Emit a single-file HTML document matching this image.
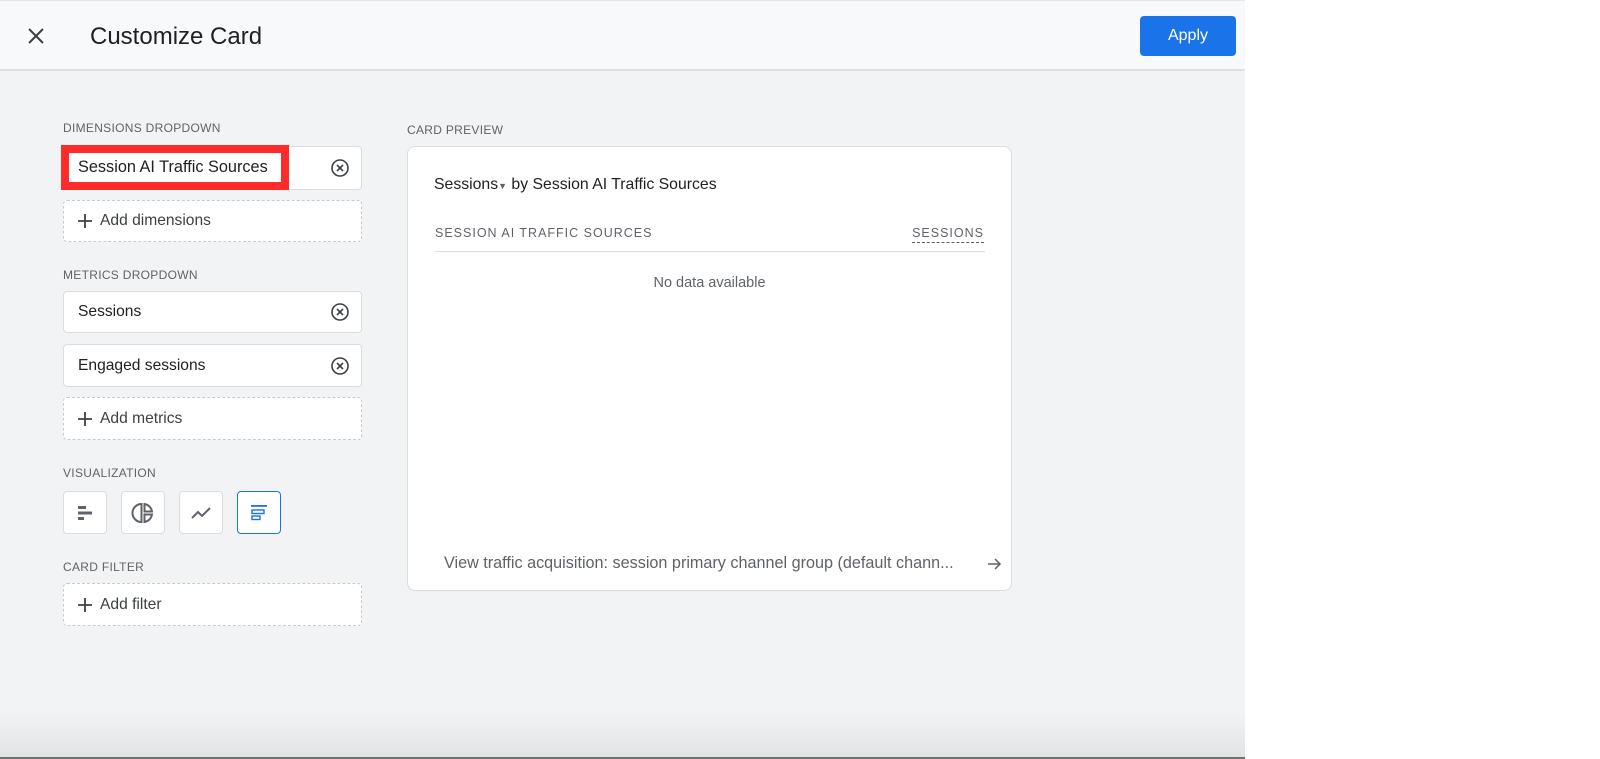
<!DOCTYPE html>
<html><head><style>
*{box-sizing:border-box;margin:0;padding:0}
body{width:1600px;height:759px;background:#fff;font-family:"Liberation Sans",sans-serif;position:relative;overflow:hidden}
#panel{position:absolute;left:0;top:0;width:1245px;height:759px;background:#f1f3f4}
#hdr{position:absolute;left:0;top:0;width:1245px;height:71px;background:#f8f9fa;border-top:1px solid #e3e4e6;border-bottom:2px solid #dfe0e2}
.lbl{position:absolute;font-size:12px;color:#5f6368;letter-spacing:.3px}
.box{position:absolute;left:63px;width:299px;background:#fff;border:1px solid #dadce0;border-radius:4px;font-size:15.6px;color:#202124}
.box span{position:absolute;left:14px;top:50%;transform:translateY(-50%)}
.dash{border:1px dashed #c8cacd}
.dash span{left:36px;color:#3c4043}
.plus{position:absolute;left:12px;top:50%;transform:translateY(-50%)}
.cx{position:absolute;right:11px;top:50%;transform:translateY(-50%)}
.vb{position:absolute;top:491px;width:44px;height:43px;background:#fff;border:1px solid #dadce0;border-radius:4px;display:flex;align-items:center;justify-content:center}
</style></head><body>
<div id="panel"></div>
<div id="hdr">
<svg style="position:absolute;left:28px;top:27px" width="16" height="16" viewBox="0 0 16 16"><path d="M1 1L15 15M15 1L1 15" stroke="#3c4043" stroke-width="2"/></svg>
<div style="position:absolute;left:90px;top:22px;font-size:24px;color:#202124">Customize Card</div>
<div style="position:absolute;left:1140px;top:15px;width:96px;height:40px;background:#1a73e8;border-radius:4px;color:#fff;font-size:16px;text-align:center;line-height:40px">Apply</div>
</div>
<div style="position:absolute;left:0;top:712px;width:1245px;height:46px;background:linear-gradient(#f1f3f4,#e2e3e5)"></div>
<div style="position:absolute;left:0;top:757px;width:1245px;height:2px;background:#6e7372"></div>

<div class="lbl" style="left:63px;top:121px">DIMENSIONS DROPDOWN</div>
<div class="box" style="top:146px;height:44px">
<svg class="cx" width="20" height="20" viewBox="0 0 20 20"><circle cx="10" cy="10" r="8" fill="none" stroke="#3c4043" stroke-width="1.6"/><path d="M7 7L13 13M13 7L7 13" stroke="#3c4043" stroke-width="1.6"/></svg>
</div>
<div style="position:absolute;left:61px;top:145px;width:228px;height:45px;border:8px solid #ff2a2a;background:#fff"></div>
<div style="position:absolute;left:78px;top:158px;font-size:16.3px;color:#202124">Session AI Traffic Sources</div>
<div class="box dash" style="top:200px;height:42px"><svg class="plus" width="18" height="18" viewBox="0 0 18 18"><path d="M9 2V16M2 9H16" stroke="#3c4043" stroke-width="1.8"/></svg><span>Add dimensions</span></div>

<div class="lbl" style="left:63px;top:268px">METRICS DROPDOWN</div>
<div class="box" style="top:291px;height:42px"><span>Sessions</span><svg class="cx" width="20" height="20" viewBox="0 0 20 20"><circle cx="10" cy="10" r="8" fill="none" stroke="#3c4043" stroke-width="1.6"/><path d="M7 7L13 13M13 7L7 13" stroke="#3c4043" stroke-width="1.6"/></svg></div>
<div class="box" style="top:344px;height:43px"><span>Engaged sessions</span><svg class="cx" width="20" height="20" viewBox="0 0 20 20"><circle cx="10" cy="10" r="8" fill="none" stroke="#3c4043" stroke-width="1.6"/><path d="M7 7L13 13M13 7L7 13" stroke="#3c4043" stroke-width="1.6"/></svg></div>
<div class="box dash" style="top:397px;height:43px"><svg class="plus" width="18" height="18" viewBox="0 0 18 18"><path d="M9 2V16M2 9H16" stroke="#3c4043" stroke-width="1.8"/></svg><span>Add metrics</span></div>

<div class="lbl" style="left:63px;top:466px">VISUALIZATION</div>
<div class="vb" style="left:63px"><svg width="18" height="18" viewBox="0 0 18 18"><rect x="2" y="2" width="8" height="3" fill="#5f6368"/><rect x="2" y="7.5" width="14" height="3" fill="#5f6368"/><rect x="2" y="13" width="6" height="3" fill="#5f6368"/></svg></div>
<div class="vb" style="left:121px"><svg width="24" height="24" viewBox="0 0 24 24"><path d="M10.5 3A9 9 0 0 0 10.5 21ZM13.5 3V10.5H21A9 9 0 0 0 13.5 3ZM13.5 13.5V21A9 9 0 0 0 21 13.5Z" fill="none" stroke="#5f6368" stroke-width="2"/></svg></div>
<div class="vb" style="left:179px"><svg width="24" height="24" viewBox="0 0 24 24"><path d="M3 17L9 11L13 15L21 7" fill="none" stroke="#5f6368" stroke-width="2"/></svg></div>
<div class="vb" style="left:237px;border-color:#1a73e8"><svg width="20" height="20" viewBox="0 0 20 20"><rect x="2" y="2" width="16" height="1.8" fill="#1a73e8"/><rect x="3" y="7" width="12" height="3.5" fill="none" stroke="#1a73e8" stroke-width="1.4"/><rect x="3" y="13" width="8" height="3.5" fill="none" stroke="#1a73e8" stroke-width="1.4"/></svg></div>

<div class="lbl" style="left:63px;top:560px">CARD FILTER</div>
<div class="box dash" style="top:583px;height:43px"><svg class="plus" width="18" height="18" viewBox="0 0 18 18"><path d="M9 2V16M2 9H16" stroke="#3c4043" stroke-width="1.8"/></svg><span>Add filter</span></div>

<div class="lbl" style="left:407px;top:123px">CARD PREVIEW</div>
<div style="position:absolute;left:407px;top:146px;width:605px;height:445px;background:#fff;border:1px solid #dadce0;border-radius:8px">
<div style="position:absolute;left:26px;top:29px;font-size:15.8px;color:#202124">Sessions<span style="font-size:9px;color:#5f6368">▼</span> by Session AI Traffic Sources</div>
<div style="position:absolute;left:27px;top:79px;font-size:12.5px;color:#5f6368;letter-spacing:1px">SESSION AI TRAFFIC SOURCES</div>
<div style="position:absolute;right:27px;top:79px;font-size:12.5px;color:#5f6368;letter-spacing:1px;border-bottom:1px dashed #5f6368;padding-bottom:2px">SESSIONS</div>
<div style="position:absolute;left:27px;top:104px;width:550px;height:1px;background:#dadce0"></div>
<div style="position:absolute;left:0;width:100%;top:128px;text-align:center;font-size:14.5px;color:#5f6368">No data available</div>
<div style="position:absolute;left:36px;top:407px;font-size:16.2px;color:#5f6368">View traffic acquisition: session primary channel group (default chann...</div>
<svg style="position:absolute;left:578px;top:409px" width="16" height="16" viewBox="0 0 16 16"><path d="M2 8H14M9 3L14 8L9 13" fill="none" stroke="#5f6368" stroke-width="1.5"/></svg>
</div>
</body></html>
